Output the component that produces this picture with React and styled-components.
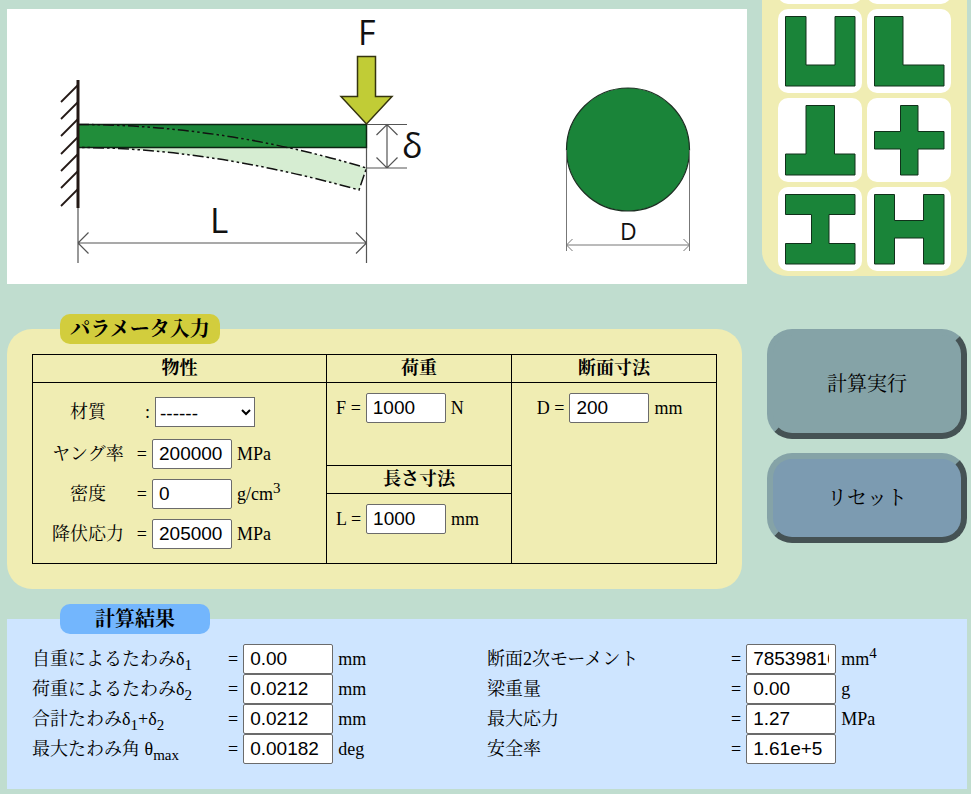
import React, { useState } from "react";
import styled, { createGlobalStyle } from "styled-components";

const serif =
  '"Liberation Serif", "Noto Serif CJK JP", "Noto Serif JP", "Noto Sans CJK JP", serif';

const GlobalStyle = createGlobalStyle`
  *, *::before, *::after { box-sizing: border-box; }
  body {
    margin: 0;
    background: #c0ddcf;
    color: #000;
    font-family: ${serif};
    font-size: 18px;
    line-height: 30px;
  }
`;

const Page = styled.main`
  padding: 0 4px 5px 7px;
`;

const TopRow = styled.section`
  display: flex;
  align-items: flex-start;
  gap: 15px;
`;

const Figure = styled.figure`
  flex: 1;
  min-width: 0;
  margin: 9px 0 0;
  background: #fff;

  svg {
    display: block;
    width: 100%;
    height: auto;
  }

  text {
    font-family: "Open Sans", "Noto Sans", sans-serif;
    fill: #111;
  }
`;

const Palette = styled.nav`
  flex: none;
  display: grid;
  grid-template-columns: 84px 84px;
  grid-template-rows: 4px;
  align-items: end;
  gap: 5px;
  overflow: hidden;
  padding: 0 16px 5px;
  border-radius: 0 0 25px 25px;
  background: #f0edb3;
`;

const Tile = styled.button`
  width: 84px;
  height: 84px;
  padding: 0;
  border: 0;
  border-radius: 10px;
  background: #fff;
  cursor: pointer;

  svg {
    display: block;
  }
`;

const InputRow = styled.section`
  display: flex;
  align-items: flex-start;
  gap: 25px;
  margin-top: 45px;
`;

const Panel = styled.section`
  flex: 1;
  min-width: 0;
  padding: 0 25px 25px;
  border-radius: 25px;
  background: #f0edb3;
`;

const PanelTitle = styled.h2`
  width: ${(p) => p.$width}px;
  margin: -15px 0 10px 28px;
  border-radius: 10px;
  background: ${(p) => p.$color};
  font-size: 20px;
  font-weight: bold;
  line-height: 30px;
  text-align: center;
`;

const ParamTable = styled.table`
  width: 100%;
  table-layout: fixed;
  border-collapse: collapse;

  th,
  td {
    padding: 0;
    border: 1px solid #000;
  }
`;

const Col = styled.col`
  width: ${(p) => p.$share}%;
`;

const HeadCell = styled.th`
  height: 28px;
  line-height: 27px;
`;

const Cell = styled.td`
  height: ${(p) => p.$height}px;
  vertical-align: top;
`;

const Fields = styled.div`
  padding: ${(p) => p.$top}px 0 0 ${(p) => p.$left}px;
  display: grid;
  gap: 10px;
`;

const Field = styled.div`
  display: flex;
  gap: 5px;
  height: 30px;
  white-space: nowrap;
`;

const MaterialField = styled(Field)`
  margin-bottom: ${(p) => (p.$spaced ? 2 : 0)}px;
`;

const MaterialLabel = styled.label`
  width: 72px;
  text-align: center;
`;

const Sign = styled.span`
  width: ${(p) => p.$width}px;
  text-align: right;
`;

const Box = styled.input`
  width: ${(p) => p.$width}px;
  height: 30px;
  padding: 0 6px;
  border: 1px solid #6b6b6b;
  border-radius: 2px;
  background: #fff;
  color: #000;
  font-family: "Liberation Sans", Arial, sans-serif;
  font-size: 19px;
`;

const Select = styled.select`
  width: 100px;
  height: 30px;
  padding-top: 3px;
  border: 1px solid #6b6b6b;
  border-radius: 0;
  background: #fff;
  color: #000;
  font-family: "Liberation Sans", Arial, sans-serif;
  font-size: 19px;
`;

const Unit = styled.span`
  sup {
    font-size: 15px;
    line-height: 0;
  }
`;

const Actions = styled.div`
  flex: none;
  width: 200px;
  display: grid;
  gap: 14px;
`;

const ActionButton = styled.button`
  height: ${(p) => p.$height}px;
  padding: 0 0 4px;
  border: 6px solid;
  border-color: #85a3a7 #455254 #455254 #85a3a7;
  border-radius: 25px;
  background: ${(p) => p.$color};
  color: #000;
  font-family: ${serif};
  font-size: 20px;
  cursor: pointer;
`;

const Results = styled.section`
  display: flow-root;
  margin-top: 30px;
  padding: 0 25px 25px;
  background: #cee5ff;
`;

const ResultColumns = styled.div`
  display: grid;
  grid-template-columns: 1fr 1fr;
`;

const ResultLabel = styled.label`
  width: ${(p) => p.$width}px;

  sub {
    font-size: 15px;
    line-height: 0;
  }
`;

const shapes = [
  ["溝形", "7.5,7.5 28,7.5 28,56 57,56 57,7.5 77,7.5 77,77 7.5,77"],
  ["山形", "7.5,7.5 36,7.5 36,56 77,56 77,77 7.5,77"],
  ["T形", "28,7.5 56.5,7.5 56.5,56 77,56 77,77 7.5,77 7.5,56 28,56"],
  [
    "十字形",
    "33.5,7.5 51,7.5 51,33.5 77,33.5 77,51 51,51 51,77 33.5,77 33.5,51 7.5,51 7.5,33.5 33.5,33.5",
  ],
  [
    "I形",
    "7.5,7.5 77,7.5 77,27.5 51,27.5 51,56.5 77,56.5 77,77 7.5,77 7.5,56.5 33.5,56.5 33.5,27.5 7.5,27.5",
  ],
  [
    "H形",
    "7.5,7.5 27.5,7.5 27.5,33.5 56.5,33.5 56.5,7.5 77,7.5 77,77 56.5,77 56.5,51 27.5,51 27.5,77 7.5,77",
  ],
];

const hatches = [76, 93, 110, 128, 145, 162, 180];

function BeamDrawing() {
  return (
    <svg viewBox="0 0 740 275" role="img" aria-label="片持ち梁と円形断面">
      <path
        d="M71 115.5Q215 115.5 359.5 159L352 181Q200 138.5 71 138.5Z"
        fill="#d6edd2"
      />
      <rect x="71" y="115.5" width="288.5" height="23" fill="#1a8439" />
      <path d="M71 115.5Q190 115.5 286 138.5L71 138.5Z" fill="#218d3a" />
      <rect
        x="71"
        y="115.5"
        width="288.5"
        height="23"
        fill="none"
        stroke="#0c2413"
        strokeWidth="1.5"
      />
      <path
        d="M71 115.5Q215 115.5 359.5 159L352 181Q200 138.5 71 138.5"
        fill="none"
        stroke="#111"
        strokeWidth="1.5"
        strokeDasharray="11 3 2.5 3 2.5 3"
      />
      <path d="M71 71V199" stroke="#231815" strokeWidth="3" />
      {hatches.map((y) => (
        <path key={y} d={`M71 ${y}L54 ${y + 17}`} stroke="#231815" strokeWidth="1.8" />
      ))}
      <path
        d="M71 199V254M359.5 139V254M71 234H359.5M81.5 223.5L71 234L81.5 244.5M349 223.5L359.5 234L349 244.5M360 115.5H400M360 159H400M380 116V159M369.5 126L380 115.5L390.5 126M369.5 148.5L380 159L390.5 148.5"
        fill="none"
        stroke="#555"
        strokeWidth="1.2"
      />
      <path
        d="M350.5 47.5H368.5V87.5H385L359.5 115L334 87.5H350.5Z"
        fill="#c1cc36"
        stroke="#35340f"
        strokeWidth="1.5"
      />
      <text x="351" y="36" fontSize="34">F</text>
      <text x="203" y="224" fontSize="35">L</text>
      <text x="395" y="149" fontSize="34">δ</text>
      <circle cx="621" cy="140.5" r="61.5" fill="#1a8439" stroke="#1c2f22" strokeWidth="1.2" />
      <path
        d="M559.5 141V242M682.5 141V242M559.5 236H682.5M565.5 230L559.5 236L565.5 242M676.5 230L682.5 236L676.5 242"
        fill="none"
        stroke="#777"
      />
      <text x="613" y="231" fontSize="23">D</text>
    </svg>
  );
}

const properties = [
  { id: "young", label: "ヤング率", value: "200000", unit: "MPa" },
  { id: "density", label: "密度", value: "0", unit: <>g/cm<sup>3</sup></> },
  { id: "yield", label: "降伏応力", value: "205000", unit: "MPa" },
];

const leftResults = [
  { id: "d1", label: <>自重によるたわみδ<sub>1</sub></>, value: "0.00", unit: "mm" },
  { id: "d2", label: <>荷重によるたわみδ<sub>2</sub></>, value: "0.0212", unit: "mm" },
  { id: "dsum", label: <>合計たわみδ<sub>1</sub>+δ<sub>2</sub></>, value: "0.0212", unit: "mm" },
  { id: "theta", label: <>最大たわみ角 θ<sub>max</sub></>, value: "0.00182", unit: "deg" },
];

const rightResults = [
  { id: "inertia", label: "断面2次モーメント", value: "78539816", unit: <>mm<sup>4</sup></> },
  { id: "weight", label: "梁重量", value: "0.00", unit: "g" },
  { id: "stress", label: "最大応力", value: "1.27", unit: "MPa" },
  { id: "safety", label: "安全率", value: "1.61e+5", unit: "" },
];

function NumberField({ id, label, initial, unit }) {
  const [value, setValue] = useState(initial);
  return (
    <Field>
      <label htmlFor={id}>{label} =</label>
      <Box id={id} $width={80} value={value} onChange={(e) => setValue(e.target.value)} />
      <Unit>{unit}</Unit>
    </Field>
  );
}

function ResultList({ items, labelWidth }) {
  return (
    <div>
      {items.map((r) => (
        <Field key={r.id}>
          <ResultLabel htmlFor={r.id} $width={labelWidth}>{r.label}</ResultLabel>
          <span>=</span>
          <Box id={r.id} $width={90} value={r.value} readOnly />
          <Unit>{r.unit}</Unit>
        </Field>
      ))}
    </div>
  );
}

export default function App() {
  return (
    <>
      <GlobalStyle />
      <Page>
        <TopRow>
          <Figure>
            <BeamDrawing />
          </Figure>
          <Palette aria-label="断面形状">
            <Tile type="button" aria-label="円形" />
            <Tile type="button" aria-label="円管" />
            {shapes.map(([name, points]) => (
              <Tile key={name} type="button" aria-label={name}>
                <svg width="84" height="84" viewBox="0 0 84 84">
                  <polygon points={points} fill="#1a8439" stroke="#10311a" />
                </svg>
              </Tile>
            ))}
          </Palette>
        </TopRow>

        <InputRow>
          <Panel>
            <PanelTitle $width={160} $color="#d2cd3d">パラメータ入力</PanelTitle>
            <ParamTable>
              <colgroup>
                <Col $share={43} />
                <Col $share={27} />
                <Col $share={30} />
              </colgroup>
              <tbody>
                <tr>
                  <HeadCell>物性</HeadCell>
                  <HeadCell>荷重</HeadCell>
                  <HeadCell>断面寸法</HeadCell>
                </tr>
                <tr>
                  <Cell rowSpan={3}>
                    <Fields $top={14} $left={19}>
                      <MaterialField $spaced>
                        <MaterialLabel htmlFor="material">材質</MaterialLabel>
                        <Sign $width={21}>:</Sign>
                        <Select id="material" defaultValue="none">
                          <option value="none">------</option>
                        </Select>
                      </MaterialField>
                      {properties.map((p) => (
                        <MaterialField key={p.id}>
                          <MaterialLabel htmlFor={p.id}>{p.label}</MaterialLabel>
                          <Sign $width={18}>=</Sign>
                          <Box id={p.id} $width={80} defaultValue={p.value} />
                          <Unit>{p.unit}</Unit>
                        </MaterialField>
                      ))}
                    </Fields>
                  </Cell>
                  <Cell $height={83}>
                    <Fields $top={10} $left={9}>
                      <NumberField id="load" label="F" initial="1000" unit="N" />
                    </Fields>
                  </Cell>
                  <Cell rowSpan={3}>
                    <Fields $top={10} $left={25}>
                      <NumberField id="diameter" label="D" initial="200" unit="mm" />
                    </Fields>
                  </Cell>
                </tr>
                <tr>
                  <HeadCell>長さ寸法</HeadCell>
                </tr>
                <tr>
                  <Cell $height={70}>
                    <Fields $top={10} $left={9}>
                      <NumberField id="length" label="L" initial="1000" unit="mm" />
                    </Fields>
                  </Cell>
                </tr>
              </tbody>
            </ParamTable>
          </Panel>
          <Actions>
            <ActionButton type="button" $height={110} $color="#85a3a7">計算実行</ActionButton>
            <ActionButton type="button" $height={90} $color="#7c9bb1">リセット</ActionButton>
          </Actions>
        </InputRow>

        <Results>
          <PanelTitle $width={150} $color="#73b6fd">計算結果</PanelTitle>
          <ResultColumns>
            <ResultList items={leftResults} labelWidth={191} />
            <ResultList items={rightResults} labelWidth={239} />
          </ResultColumns>
        </Results>
      </Page>
    </>
  );
}
